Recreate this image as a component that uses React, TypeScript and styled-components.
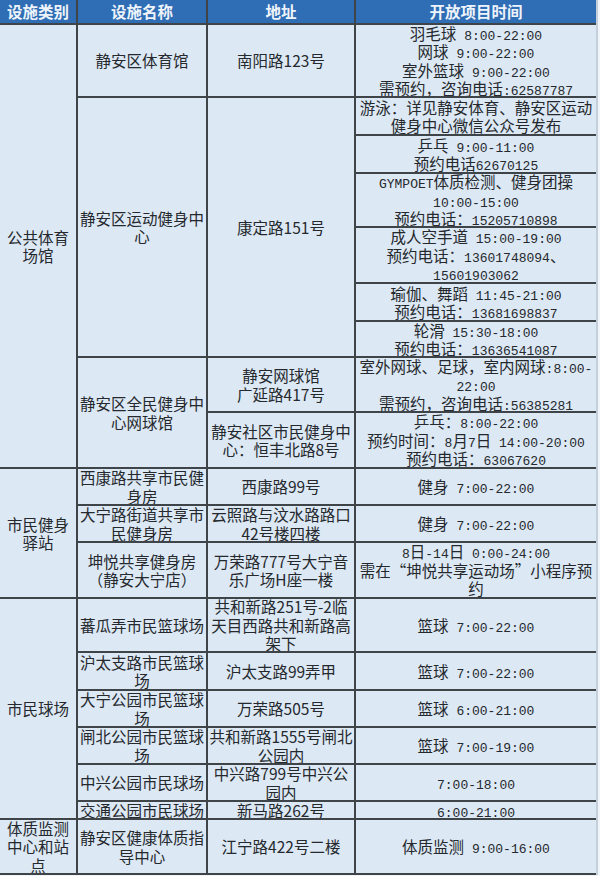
import React from "react";
import styled, { createGlobalStyle } from "styled-components";

const Global = createGlobalStyle`
  html, body {
    margin: 0;
    padding: 0;
    background: #f1f5f9;
  }
  body {
    font-family: "Noto Sans CJK SC", "Noto Sans", sans-serif;
  }
`;

const Sheet = styled.div`
  display: grid;
  grid-template-columns: 76px 128px 146px 240px;
  grid-template-rows:
    23px 71px 36px 36px 52px 54px 36px 34px 53px 54px
    35px 35px 54px 52px 36px 35px 35px 35px 16px 53px;
  gap: 2px;
  width: 596px;
  padding-bottom: 2px;
  background: #3f4449;
  border-right: 2px solid #c3cfda;
`;

const Cell = styled.div<{ $col: number; $row: number; $span?: number }>`
  grid-column: ${(p) => p.$col};
  grid-row: ${(p) => p.$row} / span ${(p) => p.$span ?? 1};
  background: #dce8f4;
  color: #25292d;
  font-size: 15.5px;
  line-height: 18.5px;
  display: flex;
  flex-direction: column;
  justify-content: center;
  align-items: center;
  text-align: center;
  white-space: nowrap;
  overflow: hidden;
`;

const HeadCell = styled.div<{ $col: number }>`
  grid-column: ${(p) => p.$col};
  grid-row: 1;
  background: #2f6db4;
  color: #eef4fb;
  font-size: 15.5px;
  font-weight: 700;
  line-height: 23px;
  text-align: center;
  white-space: nowrap;
  overflow: hidden;
`;

const Line = styled.span`
  display: block;
  height: 18.5px;
  flex: none;
`;

const Latin = styled.span`
  font-family: "Liberation Mono", "DejaVu Sans Mono", monospace;
  font-size: 13px;
  line-height: 0;
`;

type CellDef = { col: number; row: number; span?: number; lines: string[] };

const cells: CellDef[] = [
  // column 1
  { col: 1, row: 2, span: 9, lines: ["公共体育", "场馆"] },
  { col: 1, row: 11, span: 3, lines: ["市民健身", "驿站"] },
  { col: 1, row: 14, span: 6, lines: ["市民球场"] },
  { col: 1, row: 20, lines: ["体质监测", "中心和站", "点"] },
  // column 2
  { col: 2, row: 2, lines: ["静安区体育馆"] },
  { col: 2, row: 3, span: 6, lines: ["静安区运动健身中", "心"] },
  { col: 2, row: 9, span: 2, lines: ["静安区全民健身中", "心网球馆"] },
  { col: 2, row: 11, lines: ["西康路共享市民健", "身房"] },
  { col: 2, row: 12, lines: ["大宁路街道共享市", "民健身房"] },
  { col: 2, row: 13, lines: ["坤悦共享健身房", "（静安大宁店）"] },
  { col: 2, row: 14, lines: ["蕃瓜弄市民篮球场"] },
  { col: 2, row: 15, lines: ["沪太支路市民篮球", "场"] },
  { col: 2, row: 16, lines: ["大宁公园市民篮球", "场"] },
  { col: 2, row: 17, lines: ["闸北公园市民篮球", "场"] },
  { col: 2, row: 18, lines: ["中兴公园市民球场"] },
  { col: 2, row: 19, lines: ["交通公园市民球场"] },
  { col: 2, row: 20, lines: ["静安区健康体质指", "导中心"] },
  // column 3
  { col: 3, row: 2, lines: ["南阳路123号"] },
  { col: 3, row: 3, span: 6, lines: ["康定路151号"] },
  { col: 3, row: 9, lines: ["静安网球馆", "广延路417号"] },
  { col: 3, row: 10, lines: ["静安社区市民健身中", "心：恒丰北路8号"] },
  { col: 3, row: 11, lines: ["西康路99号"] },
  { col: 3, row: 12, lines: ["云照路与汶水路路口", "42号楼四楼"] },
  { col: 3, row: 13, lines: ["万荣路777号大宁音", "乐广场H座一楼"] },
  { col: 3, row: 14, lines: ["共和新路251号-2临", "天目西路共和新路高", "架下"] },
  { col: 3, row: 15, lines: ["沪太支路99弄甲"] },
  { col: 3, row: 16, lines: ["万荣路505号"] },
  { col: 3, row: 17, lines: ["共和新路1555号闸北", "公园内"] },
  { col: 3, row: 18, lines: ["中兴路799号中兴公", "园内"] },
  { col: 3, row: 19, lines: ["新马路262号"] },
  { col: 3, row: 20, lines: ["江宁路422号二楼"] },
];

const times: string[][] = [
  ["羽毛球 8:00-22:00", "网球 9:00-22:00", "室外篮球 9:00-22:00", "需预约，咨询电话:62587787"],
  ["游泳：详见静安体育、静安区运动", "健身中心微信公众号发布"],
  ["乒乓 9:00-11:00", "预约电话62670125"],
  ["GYMPOET体质检测、健身团操", "10:00-15:00", "预约电话：15205710898"],
  ["成人空手道 15:00-19:00", "预约电话：13601748094、", "15601903062"],
  ["瑜伽、舞蹈 11:45-21:00", "预约电话：13681698837"],
  ["轮滑 15:30-18:00", "预约电话：13636541087"],
  ["室外网球、足球，室内网球:8:00-", "22:00", "需预约，咨询电话:56385281"],
  ["乒乓：8:00-22:00", "预约时间：8月7日 14:00-20:00", "预约电话：63067620"],
  ["健身 7:00-22:00"],
  ["健身 7:00-22:00"],
  ["8日-14日 0:00-24:00", "需在“坤悦共享运动场”小程序预", "约"],
  ["篮球 7:00-22:00"],
  ["篮球 7:00-22:00"],
  ["篮球 6:00-21:00"],
  ["篮球 7:00-19:00"],
  ["7:00-18:00"],
  ["6:00-21:00"],
  ["体质监测 9:00-16:00"],
];

const headers = ["设施类别", "设施名称", "地址", "开放项目时间"];

function MonoLine({ text }: { text: string }) {
  const parts = text.split(/([\x20-\x7e]+)/).filter((s) => s.length > 0);
  return (
    <Line>
      {parts.map((p, i) =>
        /^[\x20-\x7e]+$/.test(p) ? <Latin key={i}>{p}</Latin> : <React.Fragment key={i}>{p}</React.Fragment>
      )}
    </Line>
  );
}

export default function App() {
  return (
    <>
      <Global />
      <Sheet>
        {headers.map((h, i) => (
          <HeadCell key={h} $col={i + 1}>
            {h}
          </HeadCell>
        ))}
        {cells.map((c) => (
          <Cell key={`${c.col}-${c.row}`} $col={c.col} $row={c.row} $span={c.span}>
            {c.lines.map((l, i) => (
              <Line key={i}>{l}</Line>
            ))}
          </Cell>
        ))}
        {times.map((lines, i) => (
          <Cell key={`t-${i}`} $col={4} $row={i + 2}>
            {lines.map((l, j) => (
              <MonoLine key={j} text={l} />
            ))}
          </Cell>
        ))}
      </Sheet>
    </>
  );
}
